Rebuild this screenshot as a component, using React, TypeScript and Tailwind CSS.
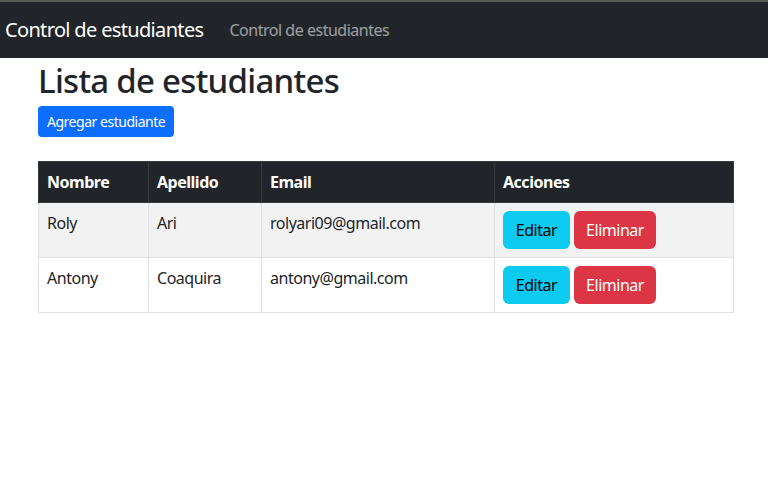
import React from "react";

const rows = [
  { nombre: "Roly", apellido: "Ari", email: "rolyari09@gmail.com" },
  { nombre: "Antony", apellido: "Coaquira", email: "antony@gmail.com" },
];

export default function App() {
  return (
    <div className="min-h-[496px] bg-white text-[#212529] tracking-[-0.03em]" style={{ fontFamily: '"Noto Sans", sans-serif' }}>
      <div className="h-[2px] bg-[#5a5a5a]" />
      <nav className="flex h-[56px] items-center bg-[#212529]">
        <span className="ml-[5px] text-[20px] leading-[30px] tracking-[-0.033em] text-white">Control de estudiantes</span>
        <span className="ml-[26px] text-[16px] leading-[24px] text-white/55">Control de estudiantes</span>
      </nav>
      <div className="ml-[38px] w-[696px]">
        <h1 className="mt-[3px] text-[33px] font-medium leading-[40px] tracking-[-0.022em]">Lista de estudiantes</h1>
        <button className="mt-[5px] h-[31px] rounded-[4px] bg-[#0d6efd] px-[9px] text-[14px] leading-[21px] text-white">
          Agregar estudiante
        </button>
        <table className="mt-[24px] w-full border-collapse text-[16px] leading-[24px]">
          <thead>
            <tr className="bg-[#212529] text-left text-white">
              <th className="w-[110px] border border-[#373b3e] px-[8px] py-[8px] font-bold">Nombre</th>
              <th className="w-[113px] border border-[#373b3e] px-[8px] py-[8px] font-bold">Apellido</th>
              <th className="w-[233px] border border-[#373b3e] px-[8px] py-[8px] font-bold">Email</th>
              <th className="border border-[#373b3e] px-[8px] py-[8px] font-bold">Acciones</th>
            </tr>
          </thead>
          <tbody>
            {rows.map((r, i) => (
              <tr key={r.email} className={i === 0 ? "bg-[#f2f2f2]" : "bg-white"}>
                <td className="border border-[#dee2e6] px-[8px] py-[8px] align-top">{r.nombre}</td>
                <td className="border border-[#dee2e6] px-[8px] py-[8px] align-top">{r.apellido}</td>
                <td className="border border-[#dee2e6] px-[8px] py-[8px] align-top">{r.email}</td>
                <td className="border border-[#dee2e6] px-[8px] py-[8px] align-top">
                  <div className="flex gap-[4px]">
                    <button className="h-[38px] w-[67px] rounded-[6px] bg-[#0dcaf0] text-[16px] text-black">Editar</button>
                    <button className="h-[38px] w-[82px] rounded-[6px] bg-[#dc3545] text-[16px] text-white">Eliminar</button>
                  </div>
                </td>
              </tr>
            ))}
          </tbody>
        </table>
      </div>
    </div>
  );
}
